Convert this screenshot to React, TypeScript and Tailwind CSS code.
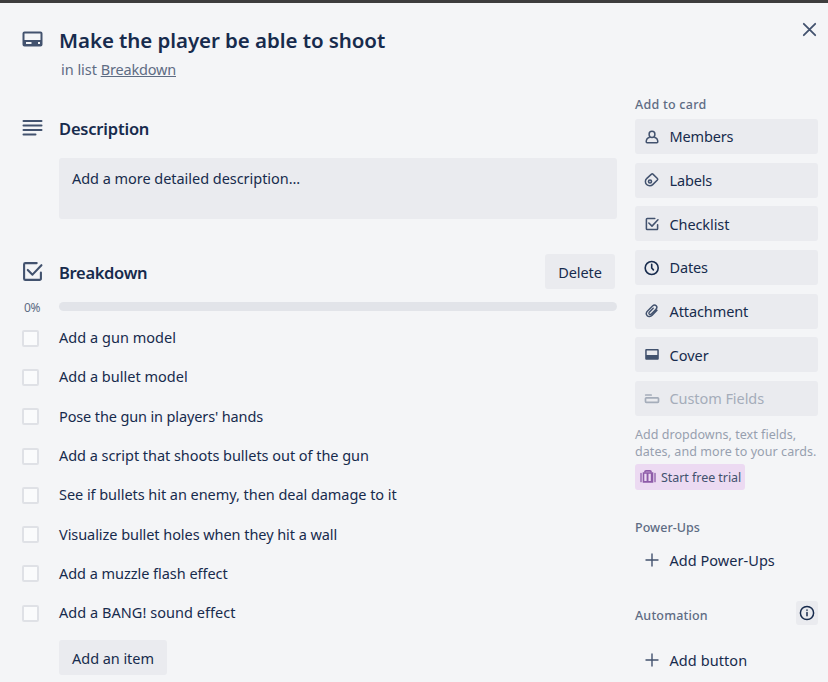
import type { ReactNode } from "react";

const items = [
  { text: "Add a gun model", spacing: "tracking-[0.03px]" },
  { text: "Add a bullet model", spacing: "tracking-[0.01px]" },
  { text: "Pose the gun in players' hands", spacing: "tracking-[-0.13px]" },
  { text: "Add a script that shoots bullets out of the gun", spacing: "tracking-[-0.04px]" },
  { text: "See if bullets hit an enemy, then deal damage to it", spacing: "tracking-[-0.05px]" },
  { text: "Visualize bullet holes when they hit a wall", spacing: "tracking-[-0.06px]" },
  { text: "Add a muzzle flash effect", spacing: "tracking-[-0.04px]" },
  { text: "Add a BANG! sound effect", spacing: "tracking-[0.04px]" },
];

function CardIcon() {
  return (
    <svg className="-mt-[3px]" width="22" height="18" viewBox="0 0 22 18" fill="none">
      <path fillRule="evenodd" fill="#42526e" d="M2.500 1.500h16a2 2 0 0 1 2 2v11a2 2 0 0 1-2 2h-16a2 2 0 0 1-2-2v-11a2 2 0 0 1 2-2Zm0 2v6.500h16V3.500h-16Zm1.500 8.500v2h5.500v-2H4Zm12 0v2h2v-2h-2Z" />
    </svg>
  );
}

function LinesIcon() {
  return (
    <svg className="-mt-[2px]" width="22" height="18" viewBox="0 0 22 18" fill="none" stroke="#42526e" strokeWidth="2" strokeLinecap="round">
      <path d="M1.500 2h18M1.500 6.500h18M1.500 11h18M1.500 15.500h12" />
    </svg>
  );
}

function CheckIcon({ size, width }: { size: number; width: number }) {
  return (
    <svg width={size} height={size} viewBox="0 0 20 20" fill="none" stroke="#42526e" strokeWidth={width} strokeLinecap="round" strokeLinejoin="round">
      <path d="M14 2H3.200A1.200 1.200 0 0 0 2 3.200v13.600A1.200 1.200 0 0 0 3.200 18h13.600a1.200 1.200 0 0 0 1.200-1.200V11" />
      <path d="m5.500 8.500 4.500 4.500 8.500-9" />
    </svg>
  );
}

function MemberIcon() {
  return (
    <svg width="16" height="16" viewBox="0 0 16 16" fill="none" stroke="#42526e" strokeWidth="1.500" strokeLinejoin="round">
      <path d="M8 2.200c1.800 0 2.900 1.300 2.900 3S9.700 8.500 8 8.500 5.100 6.900 5.100 5.200 6.200 2.200 8 2.200Z" />
      <path d="M5.800 8.200C3.500 8.800 2.200 10.500 2.200 12.800c0 .6.300.9.900.9h9.800c.6 0 .9-.3.900-.9 0-2.300-1.300-4-3.600-4.600" />
    </svg>
  );
}

function LabelIcon() {
  return (
    <svg width="16" height="16" viewBox="0 0 16 16" fill="none" stroke="#42526e" strokeWidth="1.500" strokeLinejoin="round">
      <path d="m8.900 2.100 4.500 4.400c.5.500.5 1 0 1.500l-4.700 4.600c-.8.800-1.700 1.100-2.900 1.100-2.700 0-4.400-1.700-4.400-4.200 0-1.200.4-2.200 1.200-2.900l4.900-4.500c.5-.5 1-.5 1.400 0Z" />
      <circle cx="6" cy="9.500" r="1.500" strokeWidth="1.600" />
    </svg>
  );
}

function ClockIcon() {
  return (
    <svg width="16" height="16" viewBox="0 0 16 16" fill="none" stroke="#172b4d" strokeWidth="1.600" strokeLinecap="round">
      <circle cx="7.700" cy="8" r="6.500" />
      <path d="M7.700 4.300V8l1.700 1.900" />
    </svg>
  );
}

function ClipIcon() {
  return (
    <svg width="16" height="16" viewBox="0 0 16 16" fill="none" stroke="#42526e" strokeWidth="1.400" strokeLinecap="round">
      <path d="m13 7.300-4.800 4.900c-1.600 1.600-3.800 1.800-5 .6s-1-3.400.6-5l4.700-4.700c1.200-1.200 2.700-1.300 3.700-.4 1 1 .8 2.500-.4 3.700l-4.500 4.500c-.7.700-1.600.8-2.100.2-.6-.6-.4-1.400.3-2.100l3.700-3.700" />
    </svg>
  );
}

function CoverIcon() {
  return (
    <svg width="16" height="16" viewBox="0 0 16 16">
      <path fillRule="evenodd" fill="#42526e" d="M2.500 2h11c.8 0 1.300.5 1.300 1.300v8.200c0 .8-.5 1.300-1.300 1.300h-11c-.8 0-1.300-.5-1.300-1.300V3.300C1.200 2.500 1.700 2 2.500 2Zm.2 1.500V8h10.600V3.500Z" />
    </svg>
  );
}

function FieldsIcon() {
  return (
    <svg width="16" height="16" viewBox="0 0 16 16" fill="none" stroke="#a5adba" strokeWidth="1.700" strokeLinecap="round">
      <path d="M1.700 4h5.500" />
      <rect x="1.500" y="6.800" width="13" height="4.500" rx="0.800" />
    </svg>
  );
}

function SuitcaseIcon() {
  return (
    <svg width="16" height="16" viewBox="0 0 16 16" fill="none">
      <path d="M5 3.500V2.800c0-.6.400-1 1-1h4c.6 0 1 .4 1 1v.7" stroke="#8d5ba8" strokeWidth="1.700" />
      <path d="M1 4.300v8.400M15 4.300v8.400" stroke="#8d5ba8" strokeWidth="1.300" strokeLinecap="round" />
      <path fillRule="evenodd" fill="#8d5ba8" d="M2.700 3.200h10.600v10.600H2.700Zm1.600 1.600v7.300h2.300V4.800Zm4.200 0v7.300h2.300V4.800Z" />
    </svg>
  );
}

function PlusIcon() {
  return (
    <svg className="-mt-[2px]" width="16" height="16" viewBox="0 0 16 16" fill="none" stroke="#42526e" strokeWidth="1.400" strokeLinecap="round">
      <path d="M8 2v12M2 8h12" />
    </svg>
  );
}

const actions: { text: string; icon: ReactNode; spacing: string; faded?: boolean }[] = [
  { text: "Members", icon: <MemberIcon />, spacing: "tracking-[-0.15px]" },
  { text: "Labels", icon: <LabelIcon />, spacing: "pt-px tracking-[-0.15px]" },
  { text: "Checklist", icon: <CheckIcon size={14} width={2.2} />, spacing: "pt-px tracking-[-0.1px]" },
  { text: "Dates", icon: <ClockIcon />, spacing: "tracking-[-0.15px]" },
  { text: "Attachment", icon: <ClipIcon />, spacing: "pt-px tracking-[-0.1px]" },
  { text: "Cover", icon: <CoverIcon />, spacing: "pt-px tracking-[0px]" },
  { text: "Custom Fields", icon: <FieldsIcon />, spacing: "tracking-[-0.07px]", faded: true },
];

export default function App() {
  return (
    <div className="flex h-[682px] w-[828px] overflow-hidden border-t-[3px] border-[#3d3d3d] bg-[#f4f5f7] font-['Noto_Sans',sans-serif] text-[14.5px] whitespace-nowrap text-[#172b4d]">
      <main className="w-[617px] shrink-0 pt-[21px]">
        <div className="flex h-8 items-center">
          <div className="w-[59px] pl-[22px]"><CardIcon /></div>
          <h1 className="text-[20.5px] font-semibold tracking-[-0.07px]">Make the player be able to shoot</h1>
        </div>
        <p className="mt-0.5 flex h-6 items-center pl-[61px] text-[#5e6c84]">
          <span className="tracking-[-0.03px]">in list&nbsp;</span>
          <a className="tracking-[-0.18px] underline">Breakdown</a>
        </p>
        <div className="mt-[33px] flex h-7 items-center">
          <div className="w-[59px] pl-[22px]"><LinesIcon /></div>
          <h2 className="text-[16.5px] font-semibold tracking-[-0.2px]">Description</h2>
        </div>
        <div className="mt-[15px] ml-[59px] h-[61px] rounded-[3px] bg-[#eaebef] px-[13px] pt-[10px] leading-[21px]">
          <span className="tracking-[-0.04px]">Add a more detailed description...</span>
        </div>
        <div className="mt-[35px] flex h-[35px] items-center pr-0.5">
          <div className="w-[59px] pl-[22px]"><CheckIcon size={21} width={2} /></div>
          <h2 className="flex-1 pt-[3px] text-[16.5px] font-semibold tracking-[-0.32px]">Breakdown</h2>
          <button className="h-[35px] w-[70px] rounded-[3px] bg-[#eaebef] pt-0.5 tracking-[-0.1px]">Delete</button>
        </div>
        <div className="mt-2 flex h-5 items-start pt-[5px]">
          <span className="-mt-px w-[59px] pl-6 text-[12px] leading-[14px] tracking-[-0.4px] text-[#5e6c84]">0%</span>
          <div className="h-[9px] flex-1 rounded-full bg-[#e2e4e9]" />
        </div>
        <ul className="mt-[1.5px]">
          {items.map((item, index) => (
            <li key={item.text} className="flex h-[39.3px] items-center pl-[22px]">
              <span className="mr-5 size-[17px] rounded-[2px] border-2 border-[#dfe1e6] bg-[#fafbfc]" />
              <span className={item.spacing + (index === 1 ? " -mt-px" : "")}>{item.text}</span>
            </li>
          ))}
        </ul>
        <button className="mt-[7px] ml-[59px] h-[35px] w-[108px] rounded-[3px] bg-[#eaebef] pt-[3px] tracking-[-0.05px]">Add an item</button>
      </main>

      <aside className="ml-[18px] w-[183px] shrink-0">
        <div className="flex h-[92px] justify-end pt-[18px]">
          <svg className="mr-px" width="16" height="16" viewBox="0 0 16 16" fill="none" stroke="#42526e" strokeWidth="1.800" strokeLinecap="round">
            <path d="m2.800 2.800 11.400 11.400M14.200 2.800 2.800 14.200" />
          </svg>
        </div>
        <h3 className="h-6 text-[12.5px] leading-5 font-medium tracking-[0.25px] text-[#5e6c84]">Add to card</h3>
        <div className="flex flex-col gap-[8.7px]">
          {actions.map((action) => (
            <button key={action.text} className={"flex h-[35px] items-center rounded-[3px] bg-[#eaebef] pl-[9px] " + (action.faded ? "text-[#a5adba]" : "")}>
              <span className="flex w-[25.500px] shrink-0 items-center"><span className="flex w-4 justify-center">{action.icon}</span></span>
              <span className={action.spacing}>{action.text}</span>
            </button>
          ))}
        </div>
        <p className="mt-[10px] text-[12.5px] leading-[17px] text-[#97a0af]">
          <span className="tracking-[0.04px]">Add dropdowns, text fields,</span><br />
          <span className="tracking-[0.07px]">dates, and more to your cards.</span>
        </p>
        <button className="mt-[4px] flex h-[26px] w-[110px] items-center rounded-[3px] bg-[#ecdaf2] pl-[5px] text-[12.5px] text-[#42526e]">
          <SuitcaseIcon />
          <span className="ml-[5px] pt-0.5 tracking-[-0.05px]">Start free trial</span>
        </button>
        <h3 className="mt-[28px] h-5 text-[12.5px] leading-5 font-medium tracking-[0.03px] text-[#5e6c84]">Power-Ups</h3>
        <button className="mt-[5px] flex h-[35px] w-full items-center pl-[9px]">
          <PlusIcon /><span className="ml-[9.500px] tracking-[0.04px]">Add Power-Ups</span>
        </button>
        <div className="mt-[23px] flex h-6 items-center justify-between">
          <h3 className="pt-1.5 text-[12.5px] font-medium tracking-[0.18px] text-[#5e6c84]">Automation</h3>
          <span className="flex h-6 w-[22px] items-center justify-center rounded-[3px] bg-[#eaebef]">
            <svg width="16" height="16" viewBox="0 0 16 16" fill="none" stroke="#172b4d" strokeWidth="1.500" strokeLinecap="round">
              <circle cx="8" cy="8" r="6.600" /><path d="M8 7.500v3.200M8 5.100v.1" />
            </svg>
          </span>
        </div>
        <button className="mt-[18px] flex h-[35px] w-full items-center pl-[9px]">
          <PlusIcon /><span className="ml-[9.500px] tracking-[0.08px]">Add button</span>
        </button>
      </aside>
    </div>
  );
}
